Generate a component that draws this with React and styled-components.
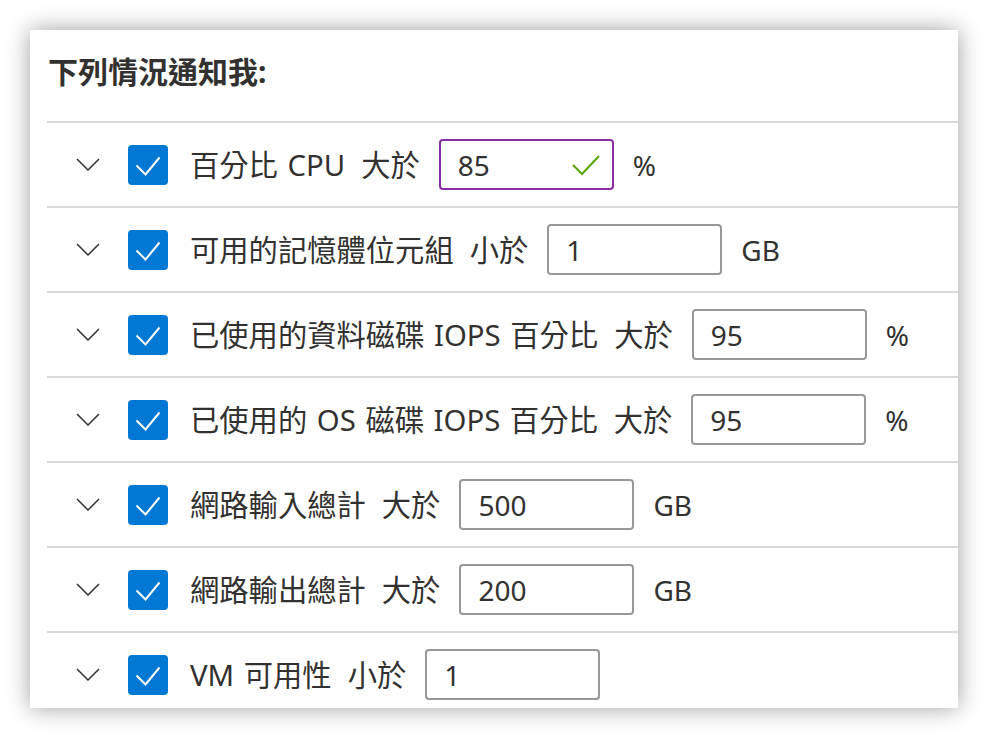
import React from "react";
import styled, { createGlobalStyle } from "styled-components";

const GlobalStyle = createGlobalStyle`
  html, body {
    margin: 0;
    padding: 0;
    background: #ffffff;
  }
  body {
    font-family: "Noto Sans", "Noto Sans CJK TC", sans-serif;
    color: #323130;
  }
`;

const rules = [
  { metric: "百分比 CPU", op: "大於", value: "85", unit: "%", active: true },
  { metric: "可用的記憶體位元組", op: "小於", value: "1", unit: "GB" },
  { metric: "已使用的資料磁碟 IOPS 百分比", op: "大於", value: "95", unit: "%" },
  { metric: "已使用的 OS 磁碟 IOPS 百分比", op: "大於", value: "95", unit: "%" },
  { metric: "網路輸入總計", op: "大於", value: "500", unit: "GB" },
  { metric: "網路輸出總計", op: "大於", value: "200", unit: "GB" },
  { metric: "VM 可用性", op: "小於", value: "1", unit: "" },
];

const Chevron = () => (
  <svg width="24" height="13" viewBox="0 0 24 13" fill="none">
    <path d="M1 1 L12 12 L23 1" stroke="#323130" strokeWidth="1.5" />
  </svg>
);

const CheckMark = () => (
  <svg width="40" height="40" viewBox="0 0 40 40" fill="none">
    <path d="M8.5 20.5 L17.5 29.5 L31.5 12.5" stroke="#ffffff" strokeWidth="2" />
  </svg>
);

const ValidMark = () => (
  <svg width="28" height="22" viewBox="0 0 28 22" fill="none">
    <path d="M1 11 L10 20 L27 2" stroke="#57a300" strokeWidth="2" />
  </svg>
);

const App = () => {
  return (
    <>
      <GlobalStyle />
      <Page>
        <Card>
          <Title>下列情況通知我:</Title>
          <List>
            {rules.map((rule, index) => (
              <Row key={index}>
                <Toggle>
                  <Chevron />
                </Toggle>
                <Checkbox>
                  <CheckMark />
                </Checkbox>
                <Label>{rule.metric}</Label>
                <Operator>{rule.op}</Operator>
                <Field $active={rule.active}>
                  <Input type="text" value={rule.value} readOnly />
                  {rule.active && (
                    <Status>
                      <ValidMark />
                    </Status>
                  )}
                </Field>
                {rule.unit && <Unit>{rule.unit}</Unit>}
              </Row>
            ))}
          </List>
        </Card>
      </Page>
    </>
  );
};

const Page = styled.div`
  padding: 30px;
`;

const Card = styled.section`
  width: 928px;
  height: 678px;
  overflow: hidden;
  background: #ffffff;
  box-shadow: 0 0 22px rgba(0, 0, 0, 0.38);
`;

const Title = styled.h2`
  margin: 0;
  padding: 22px 0 0 18px;
  height: 69px;
  line-height: 40px;
  font-size: 30px;
  font-weight: 700;
  color: #323130;
`;

const List = styled.div`
  margin-left: 17px;
`;

const Row = styled.div`
  display: flex;
  align-items: center;
  height: 83px;
  border-top: 2px solid #d9d9d9;
  padding-left: 29px;
`;

const Toggle = styled.div`
  display: flex;
  width: 24px;
  margin-right: 28px;
`;

const Checkbox = styled.div`
  display: flex;
  width: 40px;
  height: 40px;
  border-radius: 4px;
  background: #0078d4;
  margin-right: 22px;
`;

const Label = styled.span`
  font-size: 29.3px;
  line-height: 40px;
  word-spacing: 2px;
  white-space: nowrap;
  color: #323130;
`;

const Operator = styled(Label)`
  margin-left: 16px;
`;

const Field = styled.div`
  position: relative;
  box-sizing: border-box;
  width: 175px;
  height: 51px;
  margin-left: 19px;
  border: 2px solid ${(p) => (p.$active ? "#8a2da5" : "#9a9896")};
  border-radius: 4px;
  display: flex;
  align-items: center;
`;

const Input = styled.input`
  width: 100%;
  border: none;
  outline: none;
  background: transparent;
  padding: 0 0 0 17px;
  font-family: "Noto Sans", "Noto Sans CJK TC", sans-serif;
  font-size: 28px;
  color: #323130;
`;

const Status = styled.span`
  position: absolute;
  right: 12px;
  top: 13px;
  display: flex;
`;

const Unit = styled.span`
  margin-left: 19px;
  font-size: 28px;
  color: #323130;
`;

export default App;
